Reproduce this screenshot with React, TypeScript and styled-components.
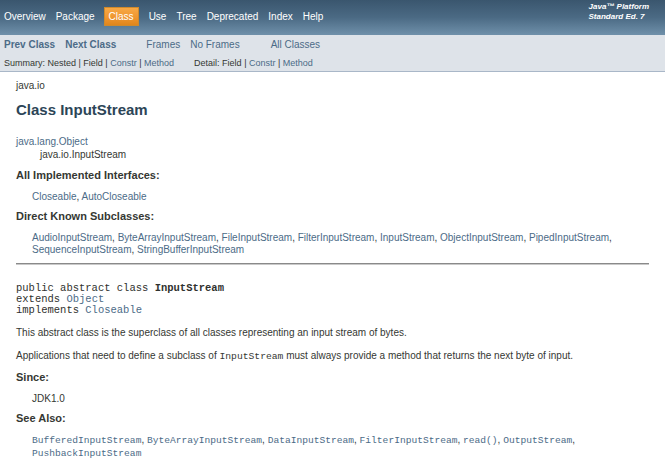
import React from "react";
import styled, { createGlobalStyle } from "styled-components";

const Global = createGlobalStyle`
  html, body { margin: 0; padding: 0; background: #ffffff; }
  body { font-family: "Liberation Sans", Arial, sans-serif; color: #353833; }
  * { box-sizing: border-box; }
`;

const Page = styled.div`
  width: 665px;
  height: 463px;
  overflow: hidden;
  font-family: "Liberation Sans", Arial, sans-serif;
  color: #353833;
`;

const TopNav = styled.div`
  height: 35px;
  background: linear-gradient(to bottom, #3a566e 0%, #4b6a84 50%, #6f90aa 100%);
  display: flex;
  justify-content: space-between;
  align-items: flex-start;
  padding: 0 16px 0 4px;
`;

const NavList = styled.div`
  display: flex;
  align-items: center;
  gap: 10px;
  height: 35px;
  padding-bottom: 3px;
`;

const NavItem = styled.span<{ $active?: boolean }>`
  font-size: 10px;
  line-height: 17px;
  color: #ffffff;
  ${(p) =>
    p.$active &&
    `
    margin-left: -1px;
    padding: 0 4px;
    height: 19px;
    display: inline-flex;
    align-items: center;
    border: 1px solid #cf8a2c;
    background: linear-gradient(to bottom, #f7a845 0%, #ef9630 55%, #e0861c 100%);
  `}
`;

const About = styled.div`
  padding-top: 2px;
  font-size: 8px;
  line-height: 10px;
  font-weight: bold;
  font-style: italic;
  color: #ffffff;
`;

const SubNav = styled.div`
  height: 37px;
  background: #dee3e9;
  border-bottom: 1px solid #a9b7c8;
  padding: 2px 4px 0;
`;

const SubRow = styled.div<{ $small?: boolean }>`
  display: flex;
  align-items: center;
  height: ${(p) => (p.$small ? "17px" : "15px")};
  font-size: ${(p) => (p.$small ? "9px" : "10px")};
  margin-top: ${(p) => (p.$small ? "2px" : "0")};
`;

const Group = styled.div<{ $gap: number; $ml?: number }>`
  display: flex;
  gap: ${(p) => p.$gap}px;
  margin-left: ${(p) => p.$ml ?? 0}px;
`;

const SubLink = styled.span<{ $bold?: boolean }>`
  color: #4c6b87;
  font-weight: ${(p) => (p.$bold ? "bold" : "normal")};
`;

const Plain = styled.span`
  color: #353833;
  white-space: pre;
`;

const Link = styled.span`
  color: #4c6b87;
`;

const Content = styled.div`
  padding: 0 16px;
  font-size: 10px;
`;

const Pkg = styled.div`
  margin-top: 8px;
  line-height: 12px;
`;

const Title = styled.h2`
  margin: 9px 0 0;
  font-size: 15px;
  line-height: 18px;
  font-weight: bold;
  color: #2c4557;
`;

const Inherit = styled.div<{ $indent?: number; $mt?: number }>`
  line-height: 13px;
  padding-left: ${(p) => p.$indent ?? 0}px;
  margin-top: ${(p) => p.$mt ?? 0}px;
`;

const Label = styled.div<{ $mt: number }>`
  margin-top: ${(p) => p.$mt}px;
  font-size: 11px;
  line-height: 13px;
  font-weight: bold;
  color: #353833;
`;

const Indented = styled.div<{ $mt: number }>`
  margin-top: ${(p) => p.$mt}px;
  padding-left: 16px;
  line-height: 12px;
`;

const Rule = styled.div`
  margin-top: 7px;
  height: 2px;
  border-top: 1px solid #8a8a8a;
  border-bottom: 1px solid #c9c9c9;
`;

const Pre = styled.pre`
  margin: 18px 0 0;
  font-family: "Liberation Mono", "Courier New", monospace;
  font-size: 10.5px;
  line-height: 11px;
  color: #2f312e;
`;

const Para = styled.p<{ $mt: number }>`
  margin: ${(p) => p.$mt}px 0 0;
  line-height: 12px;
`;

const Code = styled.code<{ $size?: number }>`
  font-family: "Liberation Mono", "Courier New", monospace;
  font-size: ${(p) => p.$size ?? 9.7}px;
`;

const CodeLink = styled(Code)`
  color: #4c6b87;
`;

const subclasses = [
  "AudioInputStream",
  "ByteArrayInputStream",
  "FileInputStream",
  "FilterInputStream",
  "InputStream",
  "ObjectInputStream",
  "PipedInputStream",
  "SequenceInputStream",
  "StringBufferInputStream",
];

const seeAlso = [
  "BufferedInputStream",
  "ByteArrayInputStream",
  "DataInputStream",
  "FilterInputStream",
  "read()",
  "OutputStream",
  "PushbackInputStream",
];

export default function App() {
  return (
    <Page>
      <Global />
      <TopNav>
        <NavList>
          <NavItem>Overview</NavItem>
          <NavItem>Package</NavItem>
          <NavItem $active>Class</NavItem>
          <NavItem>Use</NavItem>
          <NavItem>Tree</NavItem>
          <NavItem>Deprecated</NavItem>
          <NavItem>Index</NavItem>
          <NavItem>Help</NavItem>
        </NavList>
        <About>
          Java™ Platform
          <br />
          Standard Ed. 7
        </About>
      </TopNav>
      <SubNav>
        <SubRow>
          <Group $gap={10}>
            <SubLink $bold>Prev Class</SubLink>
            <SubLink $bold>Next Class</SubLink>
          </Group>
          <Group $gap={10} $ml={30}>
            <SubLink>Frames</SubLink>
            <SubLink>No Frames</SubLink>
          </Group>
          <Group $gap={10} $ml={31}>
            <SubLink>All Classes</SubLink>
          </Group>
        </SubRow>
        <SubRow $small>
          <Group $gap={0}>
            <Plain>Summary: Nested | Field | </Plain>
            <Link>Constr</Link>
            <Plain> | </Plain>
            <Link>Method</Link>
          </Group>
          <Group $gap={0} $ml={20}>
            <Plain>Detail: Field | </Plain>
            <Link>Constr</Link>
            <Plain> | </Plain>
            <Link>Method</Link>
          </Group>
        </SubRow>
      </SubNav>
      <Content>
        <Pkg>java.io</Pkg>
        <Title>Class InputStream</Title>
        <Inherit $mt={16}>
          <Link>java.lang.Object</Link>
        </Inherit>
        <Inherit $indent={24}>java.io.InputStream</Inherit>
        <Label $mt={8}>All Implemented Interfaces:</Label>
        <Indented $mt={9}>
          <Link>Closeable</Link>, <Link>AutoCloseable</Link>
        </Indented>
        <Label $mt={7}>Direct Known Subclasses:</Label>
        <Indented $mt={9}>
          {subclasses.map((s, i) => (
            <React.Fragment key={s}>
              <Link>{s}</Link>
              {i < subclasses.length - 1 ? ", " : ""}
            </React.Fragment>
          ))}
        </Indented>
        <Rule />
        <Pre>
          {"public abstract class "}
          <b>InputStream</b>
          {"\nextends "}
          <Link>Object</Link>
          {"\nimplements "}
          <Link>Closeable</Link>
        </Pre>
        <Para $mt={11}>
          This abstract class is the superclass of all classes representing an input stream of bytes.
        </Para>
        <Para $mt={11}>
          Applications that need to define a subclass of <Code>InputStream</Code> must always provide a
          method that returns the next byte of input.
        </Para>
        <Label $mt={8}>Since:</Label>
        <Indented $mt={9}>JDK1.0</Indented>
        <Label $mt={7}>See Also:</Label>
        <Indented $mt={9}>
          {seeAlso.map((s, i) => (
            <React.Fragment key={s}>
              <CodeLink $size={9.6}>{s}</CodeLink>
              {i < seeAlso.length - 1 ? ", " : ""}
            </React.Fragment>
          ))}
        </Indented>
      </Content>
    </Page>
  );
}
